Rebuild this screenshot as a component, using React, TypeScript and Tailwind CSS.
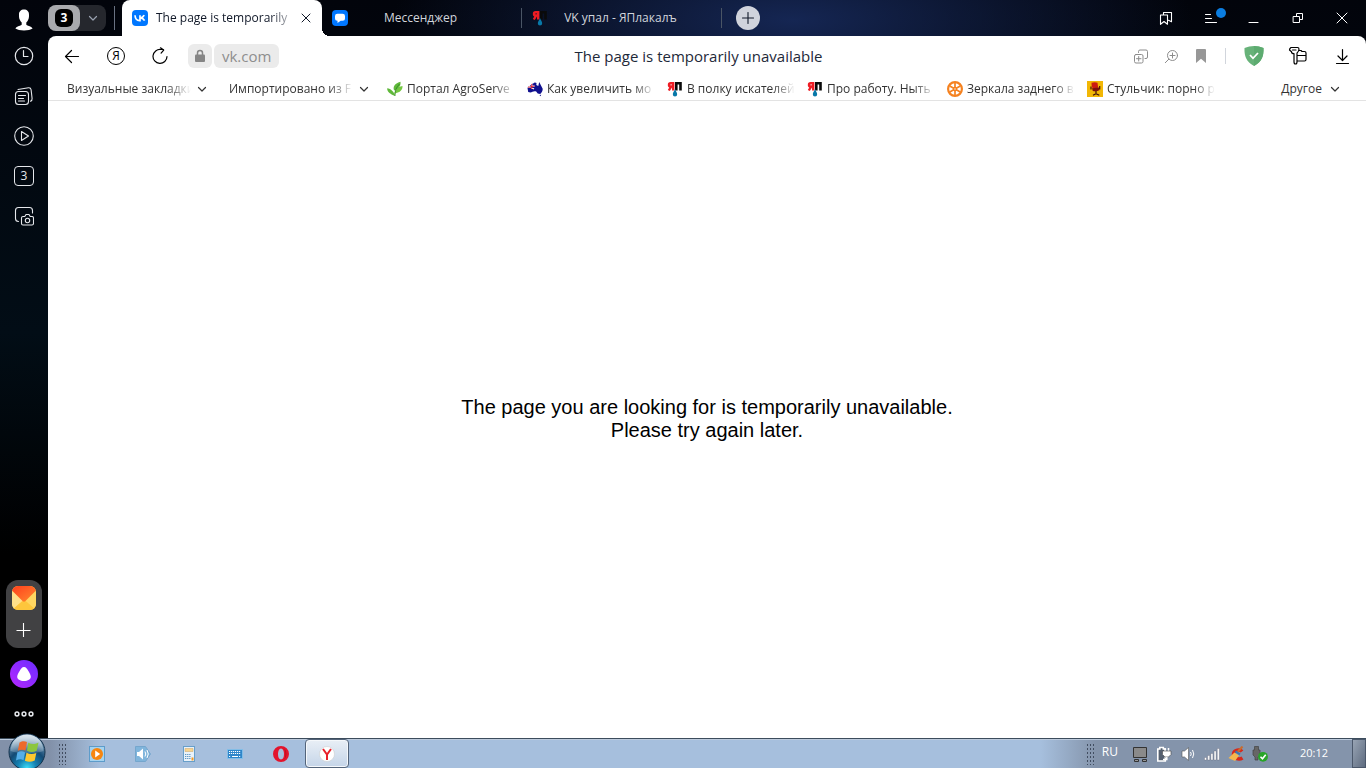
import React from 'react';
import clsx from 'clsx';

type IconProps = { className?: string };

const Line: React.FC<{ size?: number; width?: number; className?: string; children: React.ReactNode }> = ({
  size = 20,
  width = 1.1,
  className,
  children,
}) => (
  <svg
    width={size}
    height={size}
    viewBox={`0 0 ${size} ${size}`}
    fill="none"
    stroke="currentColor"
    strokeWidth={width}
    strokeLinecap="round"
    strokeLinejoin="round"
    className={clsx('shrink-0', className)}
    aria-hidden="true"
  >
    {children}
  </svg>
);

const Chevron: React.FC<IconProps> = ({ className }) => (
  <Line size={10} width={1.2} className={className}>
    <path d="M1.5 3.5 5 7l3.5-3.5" />
  </Line>
);

const Plus: React.FC<IconProps> = ({ className }) => (
  <Line size={16} className={className}>
    <path d="M7.5 1v14M.5 8.5h14" strokeLinecap="butt" />
  </Line>
);

const Cross: React.FC<{ inset?: number }> = ({ inset = 1.5 }) => (
  <Line size={12} width={1}>
    <path d={`M${inset} ${inset}L${12 - inset} ${12 - inset}M${12 - inset} ${inset}L${inset} ${12 - inset}`} />
  </Line>
);

const Avatar = () => (
  <svg width="18" height="22" viewBox="0 0 18 22" fill="#fff" aria-hidden="true">
    <path d="M4 6C3.800 2.500 6 .6 9 .6s5.200 1.900 5 5.400c.1 1.600-.2 3.500-.7 4.600-.5 1.200-1.200 2.300-2 3v1.800c0 1.200 5.300 1.500 6.300 4.200-1.800 1.300-4.900 1.900-8.600 1.900S2.200 20.900.4 19.600c1-2.700 6.300-3 6.300-4.200v-1.800c-.8-.7-1.500-1.800-2-3C4.200 9.500 3.900 7.600 4 6z" />
  </svg>
);

const VkIcon = () => (
  <svg width="16" height="16" viewBox="0 0 16 16" aria-hidden="true">
    <rect width="16" height="16" rx="4" fill="#07f" />
    <path d="M3 5.300c.2 3.400 1.900 5.300 4.600 5.300h.4V5.300M8.400 8c1.800-.2 3-1.100 3.800-2.800M8.400 7.800c2 .2 3.400 1.200 4.200 2.900" fill="none" stroke="#fff" strokeWidth="1.700" />
  </svg>
);

const ChatIcon = () => (
  <svg width="16" height="16" viewBox="0 0 16 16" aria-hidden="true">
    <rect width="16" height="16" rx="4" fill="#07f" />
    <path d="M5.500 3.800h5q2.500 0 2.500 2.300v2.200q0 2.500-2.500 2.500H8.700L5.500 13v-2.200Q3 10.800 3 8.300V6.100q0-2.300 2.500-2.300z" fill="#fff" />
  </svg>
);

const YapIcon: React.FC = () => (
  <svg width="16" height="16" viewBox="0 0 16 16" fill="none" aria-hidden="true">
    <path d="M6.200 1v8.500M6.200 2.300H3.500Q2 2.300 2 3.900t1.500 1.600h2.700M3.900 6 1.800 9.500" stroke="#ee1c24" strokeWidth="2.400" />
    <path d="M9.300 9.500V2.300h4.200v7.200" stroke="#0a0a0a" strokeWidth="2.600" />
    <path d="M8 8c.6 2.200 2.200 3.500 2.200 5.200a2.200 2.200 0 0 1-4.400 0C5.800 11.500 7.400 10.200 8 8z" fill="#0878a8" />
  </svg>
);

const SproutIcon = () => (
  <svg width="16" height="16" viewBox="0 0 16 16" aria-hidden="true">
    <path d="M8 15C7 10.500 4 8 .2 7.300 0 11 3 13 8 15z" fill="#5fb83a" />
    <path d="M7.500 14.500C7 10.500 9.500 6 15.500 5c.2 4-2.500 6.500-7 7.200z" fill="#74c741" />
    <path d="M7.300 9.500C5.500 7 7 2.500 13.500.8c.5 4-2 7.500-6.200 8.700z" fill="#5fb83a" />
    <path d="M8 15c-.4-5 1.500-9 4.500-12" stroke="#2f8422" fill="none" strokeWidth=".8" />
  </svg>
);

const AustraliaIcon = () => (
  <svg width="16" height="16" viewBox="0 0 16 16" aria-hidden="true">
    <path d="M.5 7C1 5.200 4 4.800 5 2.800c1.200.4 1.500-1.300 3-1.300L9.500 2 9.300 4l2 1 .9-4L14 4.500l1.700 3.300c.2 2.200-1.200 4.200-2.500 5.200l-2.500-.5-1.500-2c-2-1-4 .3-5.800 1L1.200 11z" fill="#10108e" />
    <path d="M1 6.300 7.500 5M4.700 3v5M2 5l5 3" stroke="#fff" strokeWidth="1.300" />
    <path d="M1 6.300 7.500 5M4.700 3v5" stroke="#e21d2c" strokeWidth=".9" />
    <path d="m12.500 14 1.700-.2-.7 1.500z" fill="#10108e" />
  </svg>
);

const WheelIcon = () => (
  <svg width="16" height="16" viewBox="0 0 16 16" fill="none" stroke="#f58220" aria-hidden="true">
    <circle cx="8" cy="8" r="6.900" strokeWidth="2.200" />
    <circle cx="8" cy="8" r="1.500" strokeWidth="1.600" />
    <path d="M8 2v4.500M8 9.500V14M2.800 5l3.900 2.200M9.300 8.800l3.900 2.200M13.200 5 9.300 7.200M6.700 8.800 2.800 11" strokeWidth="1.700" />
  </svg>
);

const ChairIcon = () => (
  <svg width="16" height="16" viewBox="0 0 16 16" aria-hidden="true">
    <path d="M0 0h16v16H0z" fill="#f2b705" />
    <path d="M4.500 1.800q3.500-1.300 6 0l.7 5-5.500.7q-1.500-3-1.200-5.700z" fill="#cc1c12" />
    <path d="M5 7.200 12 6.500l.3 2.800q-3 1.700-6.500.7z" fill="#7c120c" />
    <path d="M4 5.500v3M12.700 5v3.500M9 10v3M6 14.200l3-1.500 3.300 1.500" stroke="#3d0d08" fill="none" strokeWidth="1.200" />
  </svg>
);

const MailIcon = () => (
  <svg width="24" height="24" viewBox="0 0 24 24" aria-hidden="true">
    <defs>
      <linearGradient id="flap" x1="0" y1="0" x2="1" y2="1">
        <stop offset="0" stopColor="#ff3e1d" />
        <stop offset="1" stopColor="#ff8b2e" />
      </linearGradient>
      <clipPath id="mail-shape">
        <rect width="24" height="24" rx="6" />
      </clipPath>
    </defs>
    <g clipPath="url(#mail-shape)">
      <path d="M0 0h24v24H0z" fill="#ffcf4d" />
      <path d="M0 5v19l12-9.500z" fill="#ffe08a" />
      <path d="M24 5v19l-12-9.500z" fill="#ffd661" />
      <path d="M0 24 12 13.500 24 24z" fill="#fdc63c" />
      <path d="M0 0h24v4.500L13.500 15q-1.500 1.300-3 0L0 4.500z" fill="url(#flap)" />
    </g>
  </svg>
);

const AliceIcon = () => (
  <svg width="28" height="28" viewBox="0 0 28 28" aria-hidden="true">
    <defs>
      <linearGradient id="alice" x1="1" y1="0" x2="0" y2="1">
        <stop offset="0" stopColor="#6a2cff" />
        <stop offset="1" stopColor="#b628ff" />
      </linearGradient>
    </defs>
    <circle cx="14" cy="14" r="14" fill="url(#alice)" />
    <path d="M14 7c2 0 3.200 2 4.400 4s2.400 4 2.400 5.800C20.800 19.500 18 21 14 21s-6.800-1.500-6.800-4.200c0-1.800 1.200-3.800 2.400-5.800S12 7 14 7z" fill="#fff" />
  </svg>
);

const StartOrb = () => (
  <svg width="38" height="38" viewBox="0 0 38 38" aria-hidden="true">
    <defs>
      <radialGradient id="orb" cx=".5" cy=".95" r=".85">
        <stop offset="0" stopColor="#3fe0fa" />
        <stop offset=".3" stopColor="#1583b4" />
        <stop offset=".62" stopColor="#144a74" />
        <stop offset="1" stopColor="#779dbb" />
      </radialGradient>
      <linearGradient id="gloss" x1="0" y1="0" x2="0" y2="1">
        <stop offset="0" stopColor="#fff" stopOpacity=".75" />
        <stop offset="1" stopColor="#fff" stopOpacity=".15" />
      </linearGradient>
    </defs>
    <circle cx="19" cy="19" r="18" fill="url(#orb)" stroke="#14324c" />
    <path d="M2.500 18a16.500 16.500 0 0 1 33 0c-7 3-26 3-33 0z" fill="url(#gloss)" />
    <path d="M11.500 9.500c3-1.800 5-1.600 7.500-.4l-1.500 8.500c-2.500-1.300-5-1.200-7.700.2z" fill="#ee6a2b" />
    <path d="M20.300 9.700c3 1.600 6 1.800 10.200-.3l-1.800 8.400c-3.500 1.700-6.500 1.600-9.700-.1z" fill="#8cc63f" />
    <path d="M9.300 19.400c3-1.400 5.300-1.400 7.800 0l-1.600 7.800c-2.300-1.200-4.500-1.100-7.500.3z" fill="#54aee8" />
    <path d="M18.500 19.700c3 1.600 6 1.800 9.800.2l-1.600 7.600c-3.600 1.600-6.500 1.700-9.800.2z" fill="#fdc82f" />
  </svg>
);

const sidebarItems = [
  {
    label: 'История',
    icon: (
      <Line width={1.2}>
        <circle cx="10" cy="10" r="8.700" />
        <path d="M9.500 4.500v6h4.500" />
      </Line>
    ),
  },
  {
    label: 'Коллекции',
    icon: (
      <Line>
        <rect x="1.500" y="5.500" width="13" height="13" rx="3" />
        <path d="M4.500 9.500h7M4.500 12.500h5M4.500 15h6M4 3.500 14.500 1.800q2.300-.2 2.600 2l1 8.700q.2 2-1.600 2.700" />
      </Line>
    ),
  },
  {
    label: 'Видео',
    icon: (
      <Line>
        <circle cx="10" cy="10" r="9.300" />
        <path d="M7.500 5.500v9l7-4.500z" />
      </Line>
    ),
  },
  {
    label: 'Вкладки',
    icon: (
      <span className="flex size-5 items-center justify-center rounded-sm border border-gray-200 text-xs leading-none">
        3
      </span>
    ),
  },
  {
    label: 'Скриншот',
    icon: (
      <Line>
        <path d="M4.500 15.500q-3 0-3-3v-8q0-3 3-3h11q3 0 3 3V7" />
        <path d="M9 10.500h1.800l1.200-2h3l1.200 2H18q1.500 0 1.500 1.500v5.500q0 1.500-1.500 1.500H9q-1.500 0-1.500-1.500V12q0-1.500 1.500-1.500z" />
        <circle cx="13.500" cy="14.500" r="2.200" />
      </Line>
    ),
  },
];

const bookmarks = [
  { title: 'Портал AgroServe', icon: <SproutIcon /> },
  { title: 'Как увеличить мо', icon: <AustraliaIcon /> },
  { title: 'В полку искателей', icon: <YapIcon /> },
  { title: 'Про работу. Ныть', icon: <YapIcon /> },
  { title: 'Зеркала заднего в', icon: <WheelIcon /> },
  { title: 'Стульчик: порно р', icon: <ChairIcon /> },
];

const fade = '[mask-image:linear-gradient(to_right,#000_80%,transparent)]';

const TabBar = () => (
  <header className="flex h-9 items-stretch text-gray-300">
    <button aria-label="Профиль" className="flex w-12 items-center justify-center pt-1">
      <Avatar />
    </button>
    <div className="my-auto flex h-6.5 w-14.5 items-center rounded-lg bg-[#25272d]">
      <button aria-label="Группа вкладок" className="flex h-full w-8 items-center justify-center rounded-lg bg-[#a9aaad]">
        <span className="flex size-4.5 items-center justify-center rounded-md bg-black text-xs font-bold leading-none text-white">
          3
        </span>
      </button>
      <button aria-label="Развернуть" className="flex flex-1 justify-center text-gray-400">
        <Chevron />
      </button>
    </div>
    <div className="mx-2 my-auto h-6 w-px bg-gray-500" />
    <nav className="-ml-px flex items-stretch text-xs">
      <div className="relative flex w-50 items-center rounded-t-lg bg-white px-2.5 text-gray-900">
        <VkIcon />
        <a href="#vk" className={clsx('ml-2 flex-1 overflow-hidden whitespace-nowrap', fade)}>
          The page is temporarily
        </a>
        <button aria-label="Закрыть вкладку" className="ml-0.5">
          <Cross inset={2} />
        </button>
        <span className="absolute bottom-0 left-full size-2 bg-[radial-gradient(circle_at_top_right,transparent_8px,white_8px)]" />
      </div>
      <a href="#messenger" className="flex w-50 items-center pl-2.5">
        <ChatIcon />
        <span className="flex-1 pr-7 text-center">Мессенджер</span>
        <span className="h-5 w-px bg-gray-600" />
      </a>
      <a href="#yap" className="flex w-50 items-center pl-2.5">
        <YapIcon />
        <span className="flex-1 pr-7 text-center">VK упал - ЯПлакалъ</span>
        <span className="h-5 w-px bg-gray-600" />
      </a>
    </nav>
    <button
      aria-label="Новая вкладка"
      className="my-auto ml-3.5 flex size-6 items-center justify-center rounded-full bg-[#d0d3dc] text-gray-900"
    >
      <Line size={12}>
        <path d="M6 .5v11M.5 6h11" />
      </Line>
    </button>
    <div className="ml-auto flex text-white">
      <button aria-label="Закладки" className="flex w-11 items-center justify-center">
        <Line size={14}>
          <path d="M1.500 4h7v9.300L5 10.500l-3.500 2.800zM4.500 4V1.500h8v9.300l-3-1.500" />
        </Line>
      </button>
      <button aria-label="Меню" className="relative flex w-11 items-center justify-center">
        <Line size={14}>
          <path d="M2.500 3.500h5M2.500 7.500h6M2.500 11.500h11" />
        </Line>
        <span className="absolute right-1.5 top-2 size-2.5 rounded-full bg-[#0b7de0]" />
      </button>
      <button aria-label="Свернуть" className="flex w-11 items-center justify-center">
        <Line size={12}>
          <path d="M1 10.500h9" />
        </Line>
      </button>
      <button aria-label="Окно" className="flex w-11 items-center justify-center">
        <Line size={12} width={1}>
          <path d="M1.500 4.500h6v6h-6zM4.500 4.500v-3h6v6h-3" />
        </Line>
      </button>
      <button aria-label="Закрыть" className="flex w-11.5 items-center justify-center pr-0.5">
        <Cross inset={1} />
      </button>
    </div>
  </header>
);

const Toolbar = () => (
  <div className="flex h-10 items-center pl-0.5 text-black">
    <button aria-label="Назад" className="flex w-11 justify-center">
      <Line size={16} width={1.2}>
        <path d="M14.500 8.500H1.500M7.500 2.500l-6 6 6 6" />
      </Line>
    </button>
    <button aria-label="Яндекс" className="flex w-11 justify-center">
      <span className="flex size-4.5 items-center justify-center rounded-full border border-black text-xs leading-none">Я</span>
    </button>
    <button aria-label="Обновить" className="flex w-11 justify-center">
      <Line size={18} width={1.2}>
        <path d="M16 9.500a7 7 0 1 1-6-7h2.500M9.500.8l3.200 2.300-2.600 3" />
      </Line>
    </button>
    <div className="ml-1.5 grid flex-1 grid-cols-[1fr_auto_1fr] items-center">
      <div className="flex gap-0.5">
        <button aria-label="Соединение защищено" className="flex size-6 items-center justify-center rounded-md bg-[#ebebeb]">
          <svg width="12" height="14" viewBox="0 0 12 14" fill="#858585" aria-hidden="true">
            <rect x="1" y="5.500" width="10" height="7.500" rx="1" />
            <path d="M3.500 6V4a2.500 2.500 0 0 1 5 0v2" fill="none" stroke="#858585" strokeWidth="1.500" />
          </svg>
        </button>
        <button className="h-6 rounded-md bg-[#ebebeb] px-2 text-[15px] leading-6 text-[#8e8e8e]">vk.com</button>
      </div>
      <h1 className="text-[15px] leading-6 text-gray-800">The page is temporarily unavailable</h1>
      <div className="flex items-center justify-end gap-4 pr-0.5 text-[#8c8c8c]">
        <button aria-label="Открыть в отдельном окне">
          <Line size={15} width={1}>
            <rect x="1.500" y="5.500" width="8.500" height="8.500" rx="1.500" />
            <path d="M5.700 7.500v4.500M3.500 9.700H8M5.500 3.500V2.500q0-1.500 1.500-1.500h6q1.500 0 1.500 1.500v5.500q0 1.500-1.500 1.500h-1" />
          </Line>
        </button>
        <button aria-label="Масштаб">
          <Line size={15} width={1}>
            <circle cx="8.500" cy="6.500" r="5" />
            <path d="M8.500 4v5M6 6.500h5M4.800 10.200l-3.500 3.500" />
          </Line>
        </button>
        <button aria-label="В закладки">
          <svg width="12" height="14" viewBox="0 0 12 14" fill="#979797" aria-hidden="true">
            <path d="M1 1q0-1 1-1h8q1 0 1 1v13L6 9.800 1 14z" />
          </svg>
        </button>
      </div>
    </div>
    <span className="ml-4 mr-1.5 h-4 w-px bg-gray-300" />
    <button aria-label="Защита" className="flex w-11 justify-center">
      <svg width="20" height="20" viewBox="0 0 20 20" aria-hidden="true">
        <path d="M10 0c3 .2 6.500.8 9.500 2 .3 8-1.500 13.500-9.500 18C2 15.500.2 10 .5 2 3.500.8 7 .2 10 0z" fill="#67b279" />
        <path d="M10 0c3 .2 6.500.8 9.500 2 .3 8-1.500 13.500-9.500 18z" fill="#5dab70" />
        <path d="m6 9 3 3.300L14 7" fill="none" stroke="#fff" strokeWidth="1.800" />
      </svg>
    </button>
    <button aria-label="Пароли" className="flex w-11 justify-center">
      <Line size={20} width={1.2}>
        <path d="M3 1.500h6.500q1.500 0 1.500 1.700t-2 4v8.500q0 2.300-1.500 2.300T6 15.700v-8q-2.500 0-2.500-2L1.500 4q0-1.500 1.500-2.500zM4.500 4h3.500M11 4.500h2l1 1h2.500q1.500 0 1.500 1.500v6.500q0 1.500-1.500 1.500H9M9 9.500h9" />
      </Line>
    </button>
    <button aria-label="Загрузки" className="flex w-11.5 justify-center pr-0.5">
      <Line size={16} width={1.2}>
        <path d="M8.500 1.500v10.500M4 8l4.500 4.500L13 8M2.500 15.500h12" />
      </Line>
    </button>
  </div>
);

const BookmarksBar = () => (
  <nav className="flex h-6.25 items-center border-b border-[#e3e3e3] pl-4.75 pt-0.5 text-xs text-[#333]">
    {['Визуальные закладки', 'Импортировано из F'].map((title) => (
      <button key={title} className="flex w-40.5 shrink-0 items-center gap-1.5 pr-5.5 text-left">
        <span className={clsx('flex-1 overflow-hidden whitespace-nowrap', fade)}>{title}</span>
        <Chevron />
      </button>
    ))}
    <div className="-ml-1 flex">
      {bookmarks.map(({ title, icon }) => (
        <a key={title} href="#bookmark" className="flex w-35 shrink-0 items-center gap-1 pr-3">
          <span className="shrink-0">{icon}</span>
          <span className={clsx('flex-1 overflow-hidden whitespace-nowrap', fade)}>{title}</span>
        </a>
      ))}
    </div>
    <button className="ml-auto mr-6.5 flex items-center gap-2">
      Другое
      <Chevron />
    </button>
  </nav>
);

const Sidebar = () => (
  <aside className="flex w-12 flex-col items-center text-gray-200">
    {sidebarItems.map(({ label, icon }) => (
      <button key={label} aria-label={label} className="flex h-10 w-full items-center justify-center">
        {icon}
      </button>
    ))}
    <div className="mt-auto flex w-9 flex-col items-center gap-3 rounded-xl bg-[#414143] pb-2.5 pt-1.5">
      <button aria-label="Почта">
        <MailIcon />
      </button>
      <button aria-label="Добавить" className="text-white">
        <Plus />
      </button>
    </div>
    <button aria-label="Алиса" className="mt-3">
      <AliceIcon />
    </button>
    <button aria-label="Ещё" className="mb-3.5 mt-4">
      <Line size={20} width={1.5}>
        <circle cx="3" cy="10" r="1.900" />
        <circle cx="10" cy="10" r="1.900" />
        <circle cx="17" cy="10" r="1.900" />
      </Line>
    </button>
  </aside>
);

const launchers = [
  {
    label: 'Проигрыватель',
    icon: (
      <svg width="16" height="16" viewBox="0 0 16 16" aria-hidden="true">
        <rect x=".5" y=".5" width="15" height="15" fill="#a5d3ef" stroke="#5d9cca" />
        <circle cx="8" cy="8" r="6" fill="#f7860f" />
        <path d="M6.200 4.500v7l5-3.500z" fill="#fff" />
      </svg>
    ),
  },
  {
    label: 'Громкость',
    icon: (
      <svg width="16" height="16" viewBox="0 0 16 16" aria-hidden="true">
        <path d="M.5.500h10L15.500 8l-5 7.500H.5z" fill="#80b5dc" stroke="#75a6cd" />
        <path d="M2 6h2l4-3.500v11L4 10H2z" fill="#fff" />
        <path d="M10 5.500q1.500 2.500 0 5M12 4q2.500 4 0 8" stroke="#fff" fill="none" />
      </svg>
    ),
  },
  {
    label: 'Калькулятор',
    icon: (
      <svg width="12" height="16" viewBox="0 0 12 16" aria-hidden="true">
        <rect x=".5" y=".5" width="11" height="15" fill="#e9f2fa" stroke="#679fca" />
        <path d="M2 2.500h8v3H2z" fill="#f8d590" stroke="#c9a468" strokeWidth=".5" />
        <path d="M2 8.500h6M2 10.500h6M2 12.500h6" stroke="#5e96c3" strokeDasharray="1.300 .8" />
        <path d="M8.500 11.500h2v3h-2z" fill="#f59a23" />
      </svg>
    ),
  },
  {
    label: 'Клавиатура',
    icon: (
      <svg width="16" height="10" viewBox="0 0 16 10" aria-hidden="true">
        <rect x=".5" y=".5" width="15" height="9" fill="#2e86ca" stroke="#82bde7" />
        <path d="M2 2.500h12M2 4.500h12M2 7.500h2M12 7.500h2" stroke="#fff" strokeDasharray="1.200 .8" />
        <path d="M5 7.500h6" stroke="#fff" />
      </svg>
    ),
  },
  {
    label: 'Opera',
    icon: (
      <svg width="16" height="16" viewBox="0 0 16 16" aria-hidden="true">
        <path fillRule="evenodd" d="M8 0a8 8 0 1 0 0 16A8 8 0 0 0 8 0zm0 2.500c2 0 3 2.500 3 5.500s-1 5.500-3 5.500S5 11 5 8s1-5.500 3-5.500z" fill="#e3142d" />
        <path d="M10 1.500a8 8 0 0 1 0 13c2-1.500 2.500-4 2.500-6.500S12 3 10 1.500z" fill="#b30c1c" />
      </svg>
    ),
  },
];

const tray = [
  {
    label: 'Экран',
    icon: (
      <>
        <path d="M1.500 1.500h13v10h-13z" fill="#8a8a8a" stroke="#333" />
        <path d="M2.500 13.500h4v2h-4zM10.500 13.500h4v2h-4z" fill="#999" stroke="#333" />
      </>
    ),
  },
  {
    label: 'Питание',
    icon: (
      <>
        <path d="M1.800 3h2V1.500h3.500V3h2v12H1.800z" fill="#55606f" stroke="#fff" strokeWidth="1.600" />
        <path d="M9 2v3M12.500 2v3" stroke="#fff" strokeWidth="1.500" />
        <path d="M6.500 5h8.500v3.500L12.500 11H9L6.500 8.500z" fill="#fff" stroke="#444" strokeWidth=".6" />
        <path d="M10.800 11v2.500H7" fill="none" stroke="#fff" strokeWidth="1.500" />
      </>
    ),
  },
  {
    label: 'Звук',
    icon: (
      <>
        <path d="M2 5h2.500L8.500 1.500v13L4.500 11H2z" fill="#fff" stroke="#555" strokeWidth=".6" />
        <path d="M10.500 6q1.500 2 0 4M12.500 4q2.500 4 0 8" fill="none" stroke="#fff" />
      </>
    ),
  },
  {
    label: 'Сеть',
    icon: (
      <path
        d="M.5 11.500h2V14h-2zM3.700 9.500h2V14h-2zM6.900 7.500h2V14h-2zM10.100 5h2v9h-2zM13.300 2.500h2V14h-2z"
        fill="#fff"
        stroke="#556"
        strokeWidth=".3"
      />
    ),
  },
  {
    label: 'CCleaner',
    icon: (
      <>
        <path d="M14 5.500C12 3 6 4 5.500 8s5 6.500 9 4" fill="none" stroke="#d6291c" strokeWidth="3.500" />
        <path d="M14.500.5 9.500 6" stroke="#c96c2d" strokeWidth="2" />
        <path d="m6.500 6.500 4.500 3L7 15l-6.500-3z" fill="#f3b74f" />
        <path d="m8 4.500 4.500 3-1.200 1.800-4.500-3z" fill="#3c76b5" />
      </>
    ),
  },
  {
    label: 'Устройство',
    icon: (
      <>
        <path d="M2.500.5h4V4H8v5l-2 2v3H3v-3L1 9V4h1.500z" fill="#666" stroke="#444" strokeWidth=".7" />
        <circle cx="11" cy="10.800" r="4.900" fill="#27a527" />
        <path d="m8.500 10.800 2 2 3.200-4" fill="none" stroke="#fff" strokeWidth="1.600" />
      </>
    ),
  },
];

const Grip = () => (
  <span className="h-5.5 w-2 bg-[radial-gradient(circle,#414d60_1px,transparent_1px)] bg-[size:3px_4px]" />
);

const Taskbar = () => (
  <footer className="relative flex h-7.5 items-center border-t border-[#3c4c5c] bg-[linear-gradient(to_right,#8291a9_50px,#a6bfdd_100px,#a6bfdd_calc(100%_-_325px),#8494ab_calc(100%_-_270px))] pl-14.5 shadow-[inset_0_1px_0_#bdcbdd]">
    <button aria-label="Пуск" className="absolute -top-1.5 left-2">
      <StartOrb />
    </button>
    <Grip />
    <div className="ml-2 flex h-full">
      {launchers.map(({ label, icon }) => (
        <button key={label} aria-label={label} className="flex w-11.5 items-center justify-center">
          {icon}
        </button>
      ))}
      <button
        aria-label="Яндекс Браузер"
        className="ml-px flex w-11 items-center justify-center rounded-sm border border-[#53647a] bg-linear-to-b from-[#e9eff6] to-[#c5d5e8] shadow-[inset_0_0_0_1px_#f5f8fb]"
      >
        <svg width="16" height="16" viewBox="0 0 16 16" aria-hidden="true">
          <circle cx="8" cy="8" r="7.500" fill="#fff" stroke="#c9c9c9" strokeWidth=".5" />
          <path d="M4 3 8 8.500 12 3M8 8v6" fill="none" stroke="#e8202a" strokeWidth="2" />
        </svg>
      </button>
    </div>
    <div className="ml-auto flex h-full items-center text-xs text-white">
      <Grip />
      <span className="ml-2 pb-1">RU</span>
      <div className="ml-3.5 flex gap-2">
        {tray.map(({ label, icon }) => (
          <button key={label} aria-label={label}>
            <svg width="16" height="16" viewBox="0 0 16 16" aria-hidden="true">
              {icon}
            </svg>
          </button>
        ))}
      </div>
      <time className="ml-8 text-[11px]">20:12</time>
      <button
        aria-label="Показать рабочий стол"
        className="ml-6 h-full w-3.5 border border-[#4b586b] bg-linear-to-br from-[#98a4b4] to-[#5f6c80]"
      />
    </div>
  </footer>
);

export default function App() {
  return (
    <div className="flex min-h-screen flex-col bg-black font-['Open_Sans','Noto_Sans',sans-serif]">
      <div className="flex flex-1 flex-col bg-[radial-gradient(ellipse_400px_120px_at_58%_20px,#152653,transparent),linear-gradient(to_bottom,#02040b,#020d16_45%,#000_75%)]">
        <TabBar />
        <div className="flex flex-1">
          <Sidebar />
          <div className="flex flex-1 flex-col rounded-t-lg bg-white">
            <Toolbar />
            <BookmarksBar />
            <main className="flex flex-1 items-center justify-center pb-0.5 font-['Liberation_Sans',Arial,sans-serif]">
              <p className="text-center text-xl leading-[23px] text-black">
                The page you are looking for is temporarily unavailable.
                <br />
                Please try again later.
              </p>
            </main>
          </div>
        </div>
      </div>
      <Taskbar />
    </div>
  );
}
